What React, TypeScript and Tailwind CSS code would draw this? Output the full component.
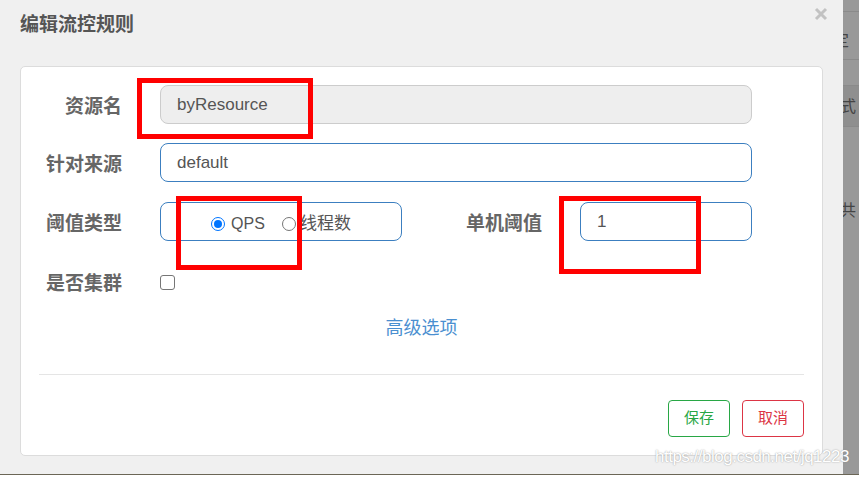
import React from "react";

const font = { fontFamily: '"Liberation Sans", "Noto Sans CJK SC", sans-serif' };

function Radio({ checked }: { checked: boolean }) {
  return checked ? (
    <span className="inline-flex w-[14px] h-[14px] rounded-full border-[1.5px] border-[#0075ff] items-center justify-center bg-white">
      <span className="w-[8px] h-[8px] rounded-full bg-[#0075ff]" />
    </span>
  ) : (
    <span className="inline-block w-[14px] h-[14px] rounded-full border border-[#767676] bg-white" />
  );
}

function Label({ children, w }: { children: React.ReactNode; w: string }) {
  return (
    <div className={`${w} mt-[4px] text-right text-[19px] leading-[24px] font-bold text-[#666]`}>{children}</div>
  );
}

export default function App() {
  return (
    <div className="relative w-[859px] h-[477px] overflow-hidden bg-white" style={font}>
      <div className="flex h-[474px]">
        {/* dialog */}
        <div className="w-[843px] bg-[#f0f0f0] flex flex-col">
          <div className="h-[66px] flex justify-between items-start pl-[20px] pr-[15px]">
            <div className="mt-[13px] text-[19px] leading-[24px] font-bold text-[#555]">编辑流控规则</div>
            <svg className="mt-[7px]" width="14" height="14" viewBox="0 0 14 14">
              <path d="M2 2 L12 12 M12 2 L2 12" stroke="#c2c2c2" strokeWidth="3" strokeLinecap="butt" />
            </svg>
          </div>
          <div className="ml-[20px] w-[803px] h-[390px] bg-white border border-[#dcdcdc] rounded-[5px] flex flex-col pt-[18px]">
            {/* row 1 */}
            <div className="flex items-center h-[39px]">
              <Label w="w-[101px]">资源名</Label>
              <div className="ml-[38px] w-[592px] h-[39px] rounded-[8px] bg-[#eeeeee] border border-[#cccccc] flex items-center pl-[16px] text-[17px] text-[#555]">
                byResource
              </div>
            </div>
            {/* row 2 */}
            <div className="flex items-center h-[39px] mt-[19px]">
              <Label w="w-[101px]">针对来源</Label>
              <div className="ml-[38px] w-[592px] h-[39px] rounded-[8px] bg-white border border-[#3c7fc0] flex items-center pl-[16px] text-[17px] text-[#555]">
                default
              </div>
            </div>
            {/* row 3 */}
            <div className="flex items-center h-[39px] mt-[20px]">
              <Label w="w-[101px]">阈值类型</Label>
              <div className="ml-[38px] w-[242px] h-[39px] rounded-[8px] bg-white border border-[#3c7fc0] flex items-center justify-center pt-[4px] text-[16px] text-[#555]">
                <Radio checked />
                <span className="ml-[6px]">QPS</span>
                <span className="ml-[17px] flex items-center">
                  <Radio checked={false} />
                </span>
                <span className="ml-[4px] text-[17px]">线程数</span>
              </div>
              <Label w="w-[140px]">单机阈值</Label>
              <div className="ml-[38px] w-[172px] h-[39px] rounded-[8px] bg-white border border-[#3c7fc0] flex items-center pl-[16px] text-[17px] text-[#555]">
                1
              </div>
            </div>
            {/* row 4 */}
            <div className="flex items-center h-[24px] mt-[29px]">
              <Label w="w-[101px]">是否集群</Label>
              <div className="ml-[38px] w-[15px] h-[15px] rounded-[3px] border border-[#767676] bg-white" />
            </div>
            <div className="mt-[22px] text-center text-[18px] leading-[24px] text-[#4a8fd0]">高级选项</div>
            <div className="mt-[34px] mx-[18px] h-px bg-[#e5e5e5]" />
            <div className="mt-[25px] mr-[18px] flex justify-end gap-[12px]">
              <div className="w-[62px] h-[37px] rounded-[4px] border border-[#28a745] text-[#28a745] text-[15px] flex items-center justify-center">
                保存
              </div>
              <div className="w-[62px] h-[37px] rounded-[4px] border border-[#dc3545] text-[#dc3545] text-[15px] flex items-center justify-center">
                取消
              </div>
            </div>
          </div>
        </div>
        {/* background strip */}
        <div className="w-[16px] bg-[#999999] flex flex-col overflow-hidden text-[16px] text-[#444]">
          <div className="h-[12px] border-b border-[#8a8a8a]" />
          <div className="h-[48px] border-b border-[#8a8a8a] flex items-center overflow-hidden">
            <span className="ml-[-10px] mt-[10px]">定</span>
          </div>
          <div className="h-[26px] border-b border-[#8a8a8a]" />
          <div className="h-[41px] bg-[#8f8f8f] border-b border-[#8a8a8a] flex items-center overflow-hidden">
            <span className="ml-[-3px] mt-[2px]">式</span>
          </div>
          <div className="h-[98px] flex items-end overflow-hidden pb-[2px]">
            <span className="ml-[-3px]">共</span>
          </div>
        </div>
      </div>
      <div className="h-px bg-[#6b6656]" />

      {/* annotation boxes */}
      <div className="absolute left-[137px] top-[78px] w-[176px] h-[61px] border-[5px] border-[#ff0000]" />
      <div className="absolute left-[176px] top-[196px] w-[126px] h-[74px] border-[5px] border-[#ff0000]" />
      <div className="absolute left-[559px] top-[196px] w-[142px] h-[78px] border-[5px] border-[#ff0000]" />

      {/* watermark */}
      <div className="absolute left-[655px] top-[446px] text-[17px] leading-[22px] text-white [text-shadow:0_0_1.5px_#8a8a8a] tracking-[-0.5px]">
        https://blog.csdn.net/jq1223
      </div>
    </div>
  );
}
